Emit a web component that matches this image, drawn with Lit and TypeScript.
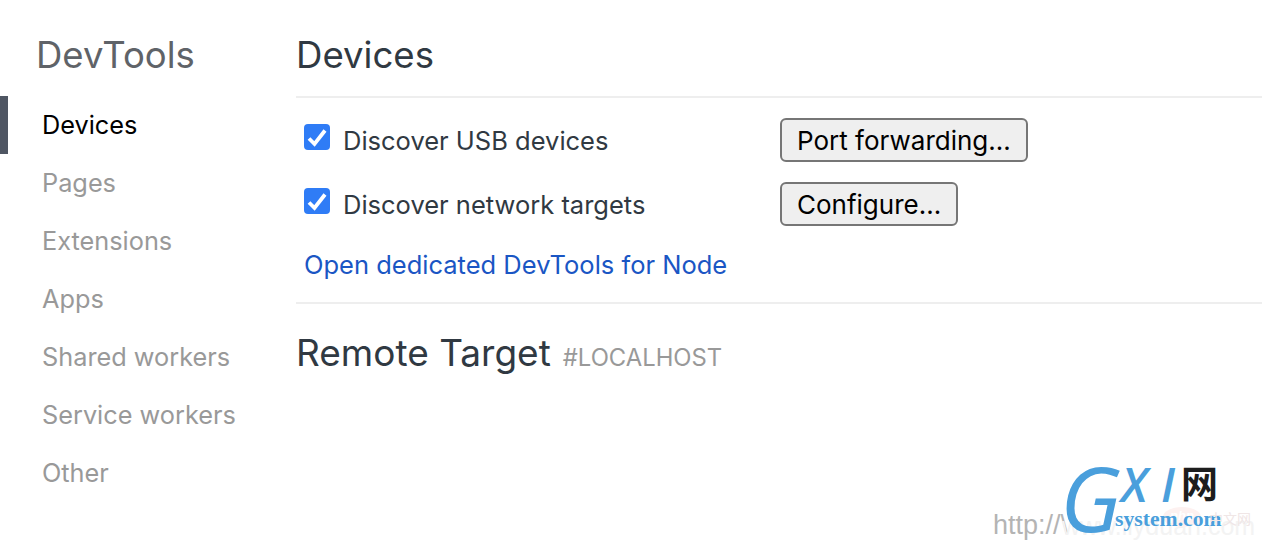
import { LitElement, html, css } from "lit";
import { customElement } from "lit/decorators.js";

const NAV = ["Devices", "Pages", "Extensions", "Apps", "Shared workers", "Service workers", "Other"];

@customElement("app-root")
export class AppRoot extends LitElement {
  static styles = css`
    :host { display: block; position: relative; width: 1262px; height: 550px; overflow: hidden; background: #fff; font-family: Inter, "Liberation Sans", sans-serif; color: #303942; }
    .page { display: flex; height: 100%; }
    .side { width: 296px; flex: none; }
    .brand { font-size: 36.5px; font-weight: 400; color: #5f6368; line-height: 44px; margin: 0; padding: 33px 0 19px 36px; }
    .nav { display: flex; flex-direction: column; }
    .nav-item { height: 58px; display: flex; align-items: center; padding: 0 0 1px 42px; box-sizing: border-box; font-size: 25.3px; color: #999; }
    .nav-item.on { color: #000; padding-left: 34px; border-left: 8px solid #4f5663; }
    .main { flex: 1; min-width: 0; }
    .title { font-size: 36.6px; font-weight: 400; line-height: 44px; margin: 0; padding-top: 33px; height: 98px; box-sizing: border-box; border-bottom: 2px solid #eee; }
    .rows { display: flex; flex-direction: column; padding: 20px 0 0 8px; gap: 20px; }
    .row { display: flex; align-items: center; height: 44px; }
    .opt { display: flex; align-items: center; width: 476px; font-size: 25.5px; }
    .box { width: 26px; height: 26px; border-radius: 4px; background: #2f7cf6; flex: none; margin-right: 13px; position: relative; top: -3px; }
    .box svg { display: block; }
    .btn { font: inherit; font-size: 26px; color: #000; background: #efefef; border: 2px solid #767676; border-radius: 6px; height: 44px; padding: 2px 15px 0; margin: 0; line-height: 1; }
    .link { font-size: 25.5px; color: #1a56c4; line-height: 34px; padding-left: 8px; margin-top: 22px; height: 38px; }
    .sep { border: 0; border-top: 2px solid #eee; margin: 16px 0 0; }
    .remote { display: flex; align-items: baseline; gap: 12px; margin: 26px 0 0; font-weight: 400; font-size: 37px; line-height: 46px; }
    .remote small { font-size: 23.8px; color: #999; }
    .mark { position: absolute; left: 0; top: 0; width: 1262px; height: 550px; pointer-events: none; }
    .url { position: absolute; left: 993px; top: 510px; font-family: "Liberation Sans", sans-serif; font-size: 27px; color: #b4b4b4; white-space: nowrap; }
    .url-faint { position: absolute; left: 1062px; top: 512px; font-family: "Liberation Sans", sans-serif; font-size: 25px; color: #f3f3f3; white-space: nowrap; }
    .blob { position: absolute; left: 1163px; top: 507px; width: 38px; height: 20px; border-radius: 50%; background: #fdf1f0; color: #fff; font: italic 700 13px/18px "Liberation Sans", sans-serif; text-align: center; }
    .g { position: absolute; left: 1060px; top: 442px; font-family: "Open Sans", sans-serif; font-style: italic; font-weight: 500; font-size: 90px; line-height: 110px; color: #4a9fdc; }
    .x, .i { position: absolute; top: 452px; font-family: "Open Sans", sans-serif; font-style: italic; font-weight: 600; font-size: 47px; line-height: 64px; color: #4a9fdc; }
    .x { left: 1121px; }
    .i { left: 1161px; }
    .wang { position: absolute; left: 1181px; top: 458px; font-family: "Noto Sans CJK SC", sans-serif; font-weight: 700; font-size: 37px; line-height: 48px; color: #1d1d1d; }
    .sys { position: absolute; left: 1115px; top: 507px; font-family: "Liberation Serif", serif; font-weight: 700; font-size: 21.7px; line-height: 24px; color: #4a9fdc; white-space: nowrap; }
    .cn { position: absolute; left: 1209px; top: 510px; font-family: "Noto Sans CJK SC", sans-serif; font-size: 14px; line-height: 16px; color: #f0e6e6; white-space: nowrap; }
  `;

  private check() {
    return html`<span class="box"><svg width="26" height="26" viewBox="0 0 26 26"><path d="M5 14.5 L10.5 20 L21 6.5" fill="none" stroke="#fff" stroke-width="3.8"/></svg></span>`;
  }

  render() {
    return html`
      <div class="page">
        <div class="side">
          <h1 class="brand">DevTools</h1>
          <div class="nav">
            ${NAV.map((n, i) => html`<div class="nav-item ${i === 0 ? "on" : ""}">${n}</div>`)}
          </div>
        </div>
        <div class="main">
          <h2 class="title">Devices</h2>
          <div class="rows">
            <div class="row"><div class="opt">${this.check()}Discover USB devices</div><button class="btn">Port forwarding...</button></div>
            <div class="row"><div class="opt">${this.check()}Discover network targets</div><button class="btn">Configure...</button></div>
          </div>
          <div class="link">Open dedicated DevTools for Node</div>
          <hr class="sep" />
          <h2 class="remote">Remote Target <small>#LOCALHOST</small></h2>
        </div>
      </div>
      <div class="mark" aria-hidden="true">
        <span class="url">http://\\</span>
        <span class="url-faint">www.iiyduan.com</span>
        <span class="blob">php</span>
        <span class="g">G</span>
        <span class="x">X</span>
        <span class="i">I</span>
        <span class="wang">网</span>
        <span class="sys">system.com</span>
        <span class="cn">中文网</span>
      </div>
    `;
  }
}
